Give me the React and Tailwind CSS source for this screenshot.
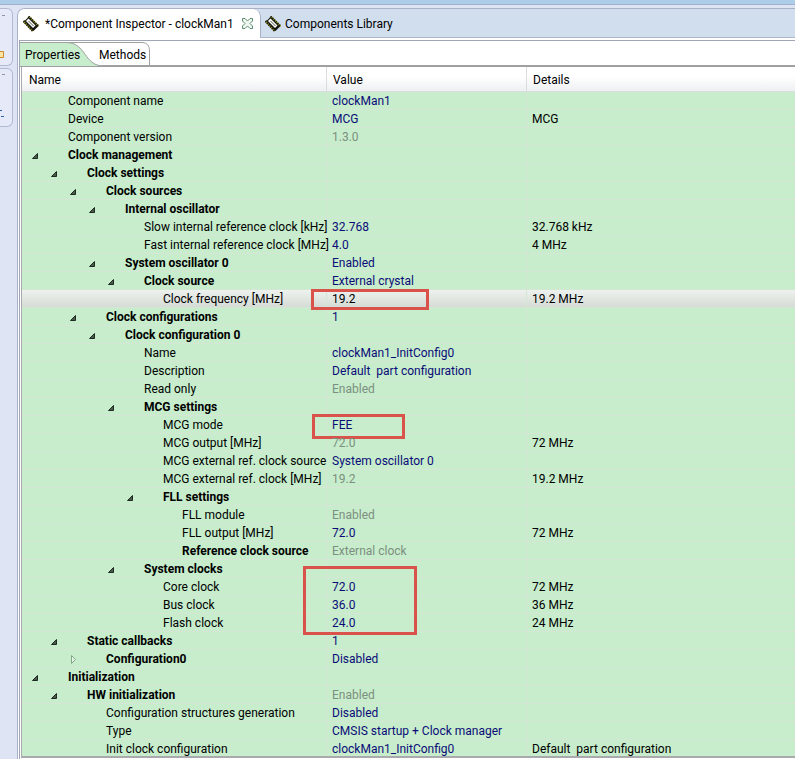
import { useState } from "react";

const ROWS = [
  { level: 0, name: "Component name", value: "clockMan1" },
  { level: 0, name: "Device", value: "MCG", details: "MCG" },
  { level: 0, name: "Component version", value: "1.3.0", muted: true },
  { level: 0, name: "Clock management", group: true },
  { level: 1, name: "Clock settings", group: true },
  { level: 2, name: "Clock sources", group: true },
  { level: 3, name: "Internal oscillator", group: true },
  { level: 4, name: "Slow internal reference clock [kHz]", value: "32.768", details: "32.768 kHz" },
  { level: 4, name: "Fast internal reference clock [MHz]", value: "4.0", details: "4 MHz" },
  { level: 3, name: "System oscillator 0", value: "Enabled", group: true },
  { level: 4, name: "Clock source", value: "External crystal", group: true },
  { level: 5, name: "Clock frequency [MHz]", value: "19.2", details: "19.2 MHz", selected: true, mark: "-left-[16px] -top-px w-[118px] h-[21px]" },
  { level: 2, name: "Clock configurations", value: "1", group: true },
  { level: 3, name: "Clock configuration 0", group: true },
  { level: 4, name: "Name", value: "clockMan1_InitConfig0" },
  { level: 4, name: "Description", value: "Default  part configuration" },
  { level: 4, name: "Read only", value: "Enabled", muted: true },
  { level: 4, name: "MCG settings", group: true },
  { level: 5, name: "MCG mode", value: "FEE", mark: "-left-[15px] -top-[2px] w-[93px] h-[25px]" },
  { level: 5, name: "MCG output [MHz]", value: "72.0", details: "72 MHz", muted: true },
  { level: 5, name: "MCG external ref. clock source", value: "System oscillator 0" },
  { level: 5, name: "MCG external ref. clock [MHz]", value: "19.2", details: "19.2 MHz", muted: true },
  { level: 5, name: "FLL settings", group: true },
  { level: 6, name: "FLL module", value: "Enabled", muted: true },
  { level: 6, name: "FLL output [MHz]", value: "72.0", details: "72 MHz" },
  { level: 6, name: "Reference clock source", value: "External clock", muted: true, bold: true },
  { level: 4, name: "System clocks", group: true },
  { level: 5, name: "Core clock", value: "72.0", details: "72 MHz", mark: "-left-[24px] -top-[12px] w-[114px] h-[69px]" },
  { level: 5, name: "Bus clock", value: "36.0", details: "36 MHz" },
  { level: 5, name: "Flash clock", value: "24.0", details: "24 MHz" },
  { level: 1, name: "Static callbacks", value: "1", group: true },
  { level: 2, name: "Configuration0", value: "Disabled", group: true },
  { level: 0, name: "Initialization", group: true },
  { level: 1, name: "HW initialization", value: "Enabled", group: true, muted: true },
  { level: 2, name: "Configuration structures generation", value: "Disabled" },
  { level: 2, name: "Type", value: "CMSIS startup + Clock manager" },
  { level: 2, name: "Init clock configuration", value: "clockMan1_InitConfig0", details: "Default  part configuration" },
];

const INDENT = ["pl-[9px]", "pl-[28px]", "pl-[47px]", "pl-[66px]", "pl-[85px]", "pl-[104px]", "pl-[123px]"];

function ChipIcon() {
  return (
    <svg className="size-4 shrink-0" viewBox="0 0 16 16" aria-hidden="true">
      <path d="M.5 5 10 15M5.500 .5 15.500 10.500" stroke="#8f9122" strokeWidth="2" />
      <path d="M.5 5 10 15M5.500 .5 15.500 10.500" stroke="#1d1d14" strokeWidth="2.500" strokeDasharray="1.200 1.200" />
      <path d="M1.500 5 5.500 1 15 10.500 10.500 15Z" fill="#15150f" />
      <path d="M3 5 5.500 2.500 12.500 9.500 10 12Z" fill="#fdfdfa" />
      <path d="m5.500 5 5 5" stroke="#55554f" />
    </svg>
  );
}

function CloseIcon() {
  return (
    <svg className="size-[11px]" viewBox="0 0 11 11" aria-hidden="true">
      <path d="M.5.5h2.500l2.500 2.500L8 .5h2.500V3L8 5.500 10.500 8v2.500H8L5.500 8 3 10.500H.5V8L3 5.500.5 3Z" fill="#eef6ef" stroke="#5b8b70" />
    </svg>
  );
}

function Twisty({ open }) {
  return (
    <svg className="size-[9px]" viewBox="0 0 9 9" aria-hidden="true">
      {open ? (
        <path d="M6.500 2.500v5h-5Z" fill="#4c5a4e" stroke="#1d2a20" />
      ) : (
        <path d="M2.500.5v8l4-4Z" fill="#dff5e1" stroke="#85a58b" />
      )}
    </svg>
  );
}

function SideStrip() {
  return (
    <aside className="flex w-[17px] shrink-0 flex-col gap-[2px]">
      <div className="flex h-[58px] w-[13px] flex-col justify-between rounded-r-md border border-l-0 border-[#b3b9d3] bg-[#e6eaf8] pt-[6px] pb-[6px]">
        <span className="ml-[2px] h-px w-[3px] bg-[#8d93a8]" />
        <svg className="h-[9px] w-[5px]" viewBox="0 0 5 9" aria-hidden="true">
          <path d="M0 1.500h3.500v6H0" fill="#ffe3a0" stroke="#c98b2b" />
        </svg>
      </div>
      <div className="flex h-[59px] w-[13px] flex-col justify-between rounded-r-md border border-l-0 border-[#b3b9d3] bg-[#e6eaf8] pt-[5px] pb-[9px]">
        <span className="ml-[2px] h-px w-[3px] bg-[#8d93a8]" />
        <svg className="h-[9px] w-[5px]" viewBox="0 0 5 9" aria-hidden="true">
          <path d="M0 2.500h2M1 8.500h3" stroke="#2e62a6" />
        </svg>
      </div>
    </aside>
  );
}

function EditorTabs() {
  return (
    <div role="tablist" className="flex h-[29px] shrink-0 border-b border-[#adb6ca] bg-[#d0deed]">
      <div className="-mb-px flex w-[243px] items-center rounded-tr-lg border-r border-[#a9b1c8] bg-white pl-[5px]">
        <button role="tab" aria-selected="true" className="flex items-center gap-[6px] whitespace-pre">
          <ChipIcon />
          *Component Inspector - clockMan1
        </button>
        <button aria-label="Close" className="ml-[8px]">
          <CloseIcon />
        </button>
      </div>
      <button role="tab" aria-selected="false" className="-mb-px flex items-center gap-[4px] pl-[4px]">
        <ChipIcon />
        Components Library
      </button>
    </div>
  );
}

function PageTabs() {
  return (
    <div role="tablist" className="relative flex h-[26px] shrink-0 border-b-2 border-[#a0a0a0] pt-[3px]">
      <svg className="absolute top-px left-0 h-[25px] w-[131px]" viewBox="0 0 131 25" aria-hidden="true">
        <path d="M0 0H46C66 0 64 24 84 24H0Z" fill="#c7edcc" />
        <path d="M0 .5H46C67 .5 63 24 84 24M46 .5H122Q129.500.5 129.500 9V24" fill="none" stroke="#a0a0a0" />
      </svg>
      <button role="tab" aria-selected="true" className="relative w-[79px] pl-[5px] text-left">
        Properties
      </button>
      <button role="tab" aria-selected="false" className="relative text-left">
        Methods
      </button>
    </div>
  );
}

function PropertyTable() {
  const [closed, setClosed] = useState(["Configuration0"]);
  const toggle = (name) =>
    setClosed(closed.includes(name) ? closed.filter((n) => n !== name) : [...closed, name]);

  const visible = [];
  let hiddenBelow = Infinity;
  for (const row of ROWS) {
    if (row.level > hiddenBelow) continue;
    hiddenBelow = row.group && closed.includes(row.name) ? row.level : Infinity;
    visible.push(row);
  }

  return (
    <table className="w-full table-fixed border-separate border-spacing-0">
      <colgroup>
        <col className="w-[305px]" />
        <col className="w-[200px]" />
        <col />
      </colgroup>
      <thead>
        <tr className="h-[25px] bg-linear-to-b from-white from-40% to-[#f0f1f3] to-90% text-left">
          <th className="border-r border-b border-[#dcdde0] p-0 pt-[2px] pl-[7px] font-normal">Name</th>
          <th className="border-r border-b border-[#dcdde0] p-0 pt-[2px] pl-[6px] font-normal">Value</th>
          <th className="border-b border-[#dcdde0] p-0 pt-[2px] pl-[6px] font-normal">Details</th>
        </tr>
      </thead>
      <tbody>
        {visible.map((row) => (
          <tr
            key={row.level + row.name}
            className={
              row.selected
                ? "h-[18px] bg-linear-to-b from-[#eef2ee] to-[#d3dad3]"
                : "h-[18px] bg-[#c7edcc]"
            }
          >
            <td className="border-r border-b border-[#d5e6d5] p-0">
              <div className={`flex items-center pt-px whitespace-nowrap ${INDENT[row.level]}`}>
                <span className="flex w-[37px] shrink-0">
                  {row.group && (
                    <button
                      aria-label={`Toggle ${row.name}`}
                      aria-expanded={!closed.includes(row.name)}
                      onClick={() => toggle(row.name)}
                    >
                      <Twisty open={!closed.includes(row.name)} />
                    </button>
                  )}
                </span>
                <span className={row.group || row.bold ? "font-bold" : ""}>{row.name}</span>
              </div>
            </td>
            <td className="border-r border-b border-[#d5e6d5] p-0">
              <div className="relative h-[17px] pt-px pl-[5px] whitespace-pre">
                <span className={row.selected ? "text-black" : row.muted ? "text-[#7d8f80]" : "text-[#0b0b78]"}>
                  {row.value}
                </span>
                {row.mark && <span className={`pointer-events-none absolute border-3 border-[#d9534a] ${row.mark}`} />}
              </div>
            </td>
            <td className="border-b border-[#d5e6d5] p-0 pt-px pl-[5px] whitespace-pre">{row.details}</td>
          </tr>
        ))}
      </tbody>
    </table>
  );
}

export default function App() {
  return (
    <div className="flex h-screen flex-col overflow-hidden bg-[#dfe4f5] font-['Roboto','Open_Sans',sans-serif] text-[12px] leading-4 text-black">
      <div className="h-[5px] shrink-0 border-b border-[#9fb0cf] bg-[#aecde8]" />
      <div className="mt-[3px] flex min-h-0 flex-1">
        <SideStrip />
        <main className="flex min-w-0 flex-1 flex-col overflow-hidden rounded-tl-lg border-t border-l border-[#a9b1c8] bg-white">
          <EditorTabs />
          <section className="mt-[2px] ml-px flex min-h-0 flex-1 flex-col border-t border-l border-[#a0a5b4]">
            <PageTabs />
            <div className="mb-px ml-px min-h-0 flex-1 border-b-2 border-l border-[#a9a9ae]">
              <div className="h-full overflow-hidden">
                <PropertyTable />
              </div>
            </div>
          </section>
        </main>
      </div>
    </div>
  );
}
